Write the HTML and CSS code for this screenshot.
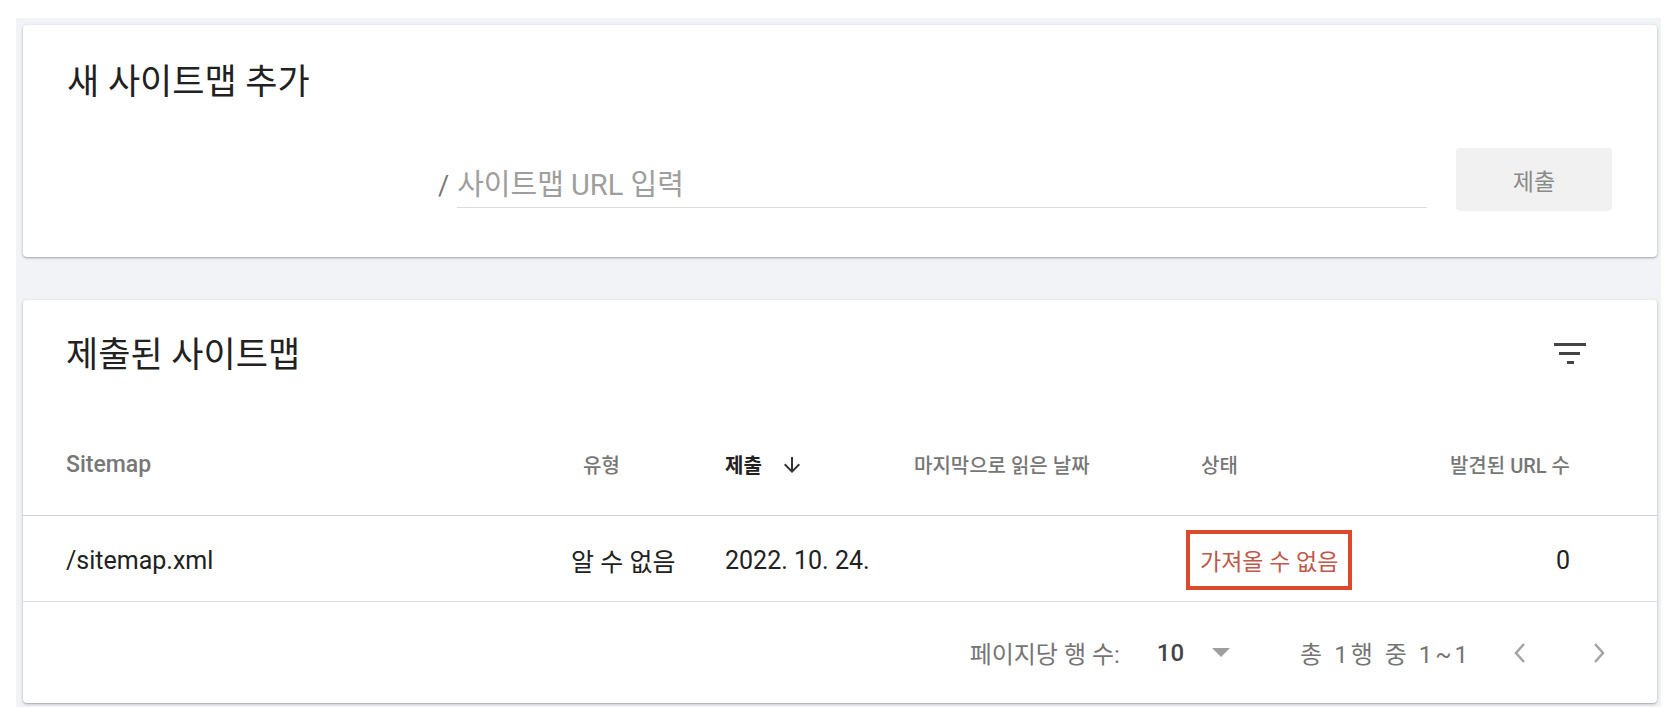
FILE: index.html
```
<!DOCTYPE html>
<html lang="ko">
<head>
    <meta charset="UTF-8">
    <meta name="viewport" content="width=device-width, initial-scale=1.0">
    <title>Sitemaps</title>
    <link rel="stylesheet" href="styles.css">
</head>
<body>
    <div class="page">
        <section class="card add-card">
            <h2 class="card-title">새 사이트맵 추가</h2>
            <div class="add-row">
                <div class="domain"></div>
                <span class="slash">/</span>
                <div class="url-field"><span class="placeholder">사이트맵 URL 입력</span></div>
                <div class="submit-btn">제출</div>
            </div>
        </section>

        <section class="card list-card">
            <div class="list-head">
                <h2 class="card-title">제출된 사이트맵</h2>
                <svg class="filter-icon" width="32" height="24" viewBox="0 0 32 24">
                    <rect x="0" y="1" width="32" height="3" fill="#444"/>
                    <rect x="5" y="10" width="21" height="3" fill="#444"/>
                    <rect x="13" y="19" width="7" height="3" fill="#444"/>
                </svg>
            </div>
            <div class="table-row head-row">
                <div class="latin-head">Sitemap</div>
                <div class="type-head">유형</div>
                <div class="sorted">제출
                    <svg width="24" height="24" viewBox="0 0 24 24"><path d="M20 12l-1.41-1.41L13 16.17V4h-2v12.17l-5.58-5.59L4 12l8 8 8-8z" fill="#333"/></svg>
                </div>
                <div>마지막으로 읽은 날짜</div>
                <div class="status-head">상태</div>
                <div class="num">발견된 URL 수</div>
            </div>
            <div class="table-row data-row">
                <div>/sitemap.xml</div>
                <div>알 수 없음</div>
                <div>2022. 10. 24.</div>
                <div></div>
                <div><span class="status-error">가져올 수 없음</span></div>
                <div class="num">0</div>
            </div>
            <div class="table-foot">
                <span class="foot-label">페이지당 행 수:</span>
                <span class="per-page">10</span>
                <span class="caret"></span>
                <span class="foot-label range">총 1행 중 1~1</span>
                <div class="page-btn">
                    <svg width="14" height="22" viewBox="0 0 14 22"><polyline points="11,2 3,11 11,20" fill="none" stroke="#a3a3a3" stroke-width="2.5"/></svg>
                </div>
                <div class="page-btn">
                    <svg width="14" height="22" viewBox="0 0 14 22"><polyline points="3,2 11,11 3,20" fill="none" stroke="#a3a3a3" stroke-width="2.5"/></svg>
                </div>
            </div>
        </section>
    </div>
</body>
</html>
```

FILE: styles.css
```
* {
    margin: 0;
    padding: 0;
    box-sizing: border-box;
}

body {
    background: #fff;
    font-family: Roboto, "Noto Sans CJK KR", sans-serif;
    color: #212121;
}

.page {
    margin: 18px 16px 0 16px;
    padding: 7px 4px 4px 7px;
    background: #f1f3f7;
}

.card {
    background: #fff;
    border-radius: 4px;
    box-shadow: 0 1px 3px rgba(0, 0, 0, 0.28), 0 1px 1px rgba(0, 0, 0, 0.08);
}

.card-title {
    font-size: 35px;
    font-weight: 400;
    line-height: 40px;
    color: #212121;
}

/* add sitemap */
.add-card {
    height: 232px;
    padding: 38px 45px 0 44px;
}

.add-row {
    display: flex;
    align-items: flex-start;
    margin-top: 45px;
}

.domain {
    width: 371px;
    height: 60px;
}

.slash {
    font-size: 27px;
    line-height: 60px;
    padding-top: 8px;
    color: #777;
}

.url-field {
    flex: 1;
    height: 60px;
    margin-left: 8px;
    padding-top: 8px;
    display: flex;
    align-items: center;
    border-bottom: 1px solid #dcdcdc;
}

.placeholder {
    font-size: 29px;
    color: #9e9e9e;
}

.submit-btn {
    width: 156px;
    height: 63px;
    margin-left: 29px;
    border-radius: 4px;
    background: #f1f1f1;
    color: #8a8a8a;
    font-size: 23px;
    display: flex;
    justify-content: center;
    align-items: center;
}

/* submitted sitemaps */
.list-card {
    margin-top: 43px;
    height: 403px;
}

.list-head {
    height: 114px;
    padding: 36px 71px 0 43px;
    display: flex;
    justify-content: space-between;
    align-items: flex-start;
}

.filter-icon {
    margin-top: 6px;
}

.table-row {
    display: grid;
    grid-template-columns: 505px 154px 189px 272px 1fr 200px;
    align-items: center;
    padding: 0 87px 0 43px;
}

.head-row {
    height: 102px;
    border-bottom: 1px solid #d4d4d4;
    font-size: 20px;
    font-weight: 500;
    color: #777;
}

.latin-head {
    font-size: 23px;
}

.type-head {
    padding-left: 12px;
}

.status-head {
    padding-left: 15px;
}

.sorted {
    color: #212121;
    font-weight: 700;
    display: flex;
    align-items: center;
    gap: 18px;
}

.num {
    text-align: right;
}

.data-row {
    height: 86px;
    padding-top: 3px;
    border-bottom: 1px solid #e0e0e0;
    font-size: 25px;
}

.status-error {
    display: inline-flex;
    align-items: center;
    height: 60px;
    padding: 0 10px;
    border: 4px solid #db4a2b;
    color: #c0584a;
    font-size: 23px;
}

.table-foot {
    height: 101px;
    display: flex;
    justify-content: flex-end;
    align-items: center;
    padding-right: 38px;
}

.foot-label {
    font-size: 24px;
    color: #757575;
}

.per-page {
    font-size: 24px;
    font-weight: 500;
    color: #444;
    margin-left: 37px;
}

.caret {
    margin-left: 28px;
    border-left: 9px solid transparent;
    border-right: 9px solid transparent;
    border-top: 9px solid #9e9e9e;
}

.range {
    letter-spacing: 3px;
    margin-left: 70px;
    margin-right: 29px;
}

.page-btn {
    width: 40px;
    height: 40px;
    display: flex;
    justify-content: center;
    align-items: center;
}

.page-btn + .page-btn {
    margin-left: 39px;
}
```
